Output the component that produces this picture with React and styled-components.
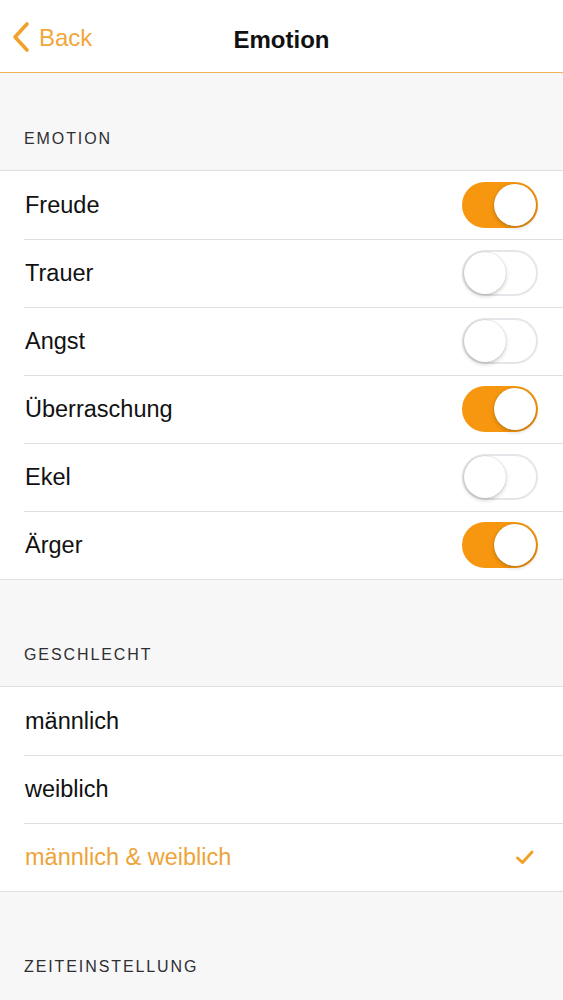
import React, { useState } from "react";
import styled, { createGlobalStyle } from "styled-components";

const GlobalStyle = createGlobalStyle`
  html, body {
    margin: 0;
    padding: 0;
    background: #f7f7f8;
    font-family: "Liberation Sans", Arial, sans-serif;
  }
`;

const emotions = [
  { id: "freude", label: "Freude", on: true },
  { id: "trauer", label: "Trauer", on: false },
  { id: "angst", label: "Angst", on: false },
  { id: "ueberraschung", label: "Überraschung", on: true },
  { id: "ekel", label: "Ekel", on: false },
  { id: "aerger", label: "Ärger", on: true },
];

const genders = ["männlich", "weiblich", "männlich & weiblich"];

const App = () => {
  const [state, setState] = useState(
    Object.fromEntries(emotions.map((e) => [e.id, e.on]))
  );
  const [gender, setGender] = useState("männlich & weiblich");

  return (
    <Page>
      <GlobalStyle />
      <NavBar>
        <BackButton>
          <svg width="20" height="32" viewBox="0 0 20 32">
            <path
              d="M16 3 L4 16 L16 29"
              fill="none"
              stroke="#f1a129"
              strokeWidth="3.6"
              strokeLinecap="round"
              strokeLinejoin="round"
            />
          </svg>
          <span>Back</span>
        </BackButton>
        <Title>Emotion</Title>
      </NavBar>

      <SectionHeader $height={97}>EMOTION</SectionHeader>
      <Group>
        {emotions.map((e) => (
          <Row key={e.id}>
            <Label>{e.label}</Label>
            <Toggle
              $on={state[e.id]}
              onClick={() => setState({ ...state, [e.id]: !state[e.id] })}
            >
              <Knob $on={state[e.id]} />
            </Toggle>
          </Row>
        ))}
      </Group>

      <SectionHeader $height={106}>GESCHLECHT</SectionHeader>
      <Group>
        {genders.map((g) => (
          <Row key={g} onClick={() => setGender(g)}>
            <Label $active={gender === g}>{g}</Label>
            {gender === g && (
              <svg width="20" height="16" viewBox="0 0 20 16">
                <path
                  d="M2.5 9 L7.5 13.5 L17 3"
                  fill="none"
                  stroke="#f1a129"
                  strokeWidth="3"
                  strokeLinecap="round"
                  strokeLinejoin="round"
                />
              </svg>
            )}
          </Row>
        ))}
      </Group>

      <SectionHeader $height={106}>ZEITEINSTELLUNG</SectionHeader>
    </Page>
  );
};

const Page = styled.div`
  width: 563px;
  min-height: 1000px;
  background: #f7f7f8;
`;

const NavBar = styled.header`
  position: relative;
  height: 72px;
  background: #ffffff;
  border-bottom: 1px solid #efb45a;
  display: flex;
  align-items: center;
  justify-content: center;
`;

const BackButton = styled.div`
  position: absolute;
  left: 11px;
  top: 21px;
  display: flex;
  align-items: center;
  gap: 8px;
  color: #f2a73b;
  font-size: 24px;

  span {
    margin-top: 2px;
  }
`;

const Title = styled.h1`
  margin: 0;
  margin-top: 8px;
  font-size: 24px;
  font-weight: 700;
  color: #111;
`;

const SectionHeader = styled.div`
  height: ${(p) => p.$height}px;
  box-sizing: border-box;
  display: flex;
  align-items: flex-end;
  padding: 0 0 21px 24px;
  font-size: 16px;
  line-height: 20px;
  letter-spacing: 1.9px;
  color: #2e2e33;
`;

const Group = styled.section`
  background: #ffffff;
  border-top: 1px solid #dedee2;
  border-bottom: 1px solid #dedee2;
`;

const Row = styled.div`
  position: relative;
  height: 68px;
  box-sizing: border-box;
  display: flex;
  align-items: center;
  justify-content: space-between;
  padding: 0 28px 0 25px;

  & + &::before {
    content: "";
    position: absolute;
    left: 24px;
    right: 0;
    top: 0;
    height: 1px;
    background: #dedee2;
  }
`;

const Label = styled.span`
  font-size: 23.5px;
  color: ${(p) => (p.$active ? "#eda43a" : "#111")};
`;

const Toggle = styled.div`
  position: relative;
  width: 76px;
  height: 46px;
  border-radius: 23px;
  box-sizing: border-box;
  margin-right: -3px;
  background: ${(p) => (p.$on ? "#f7960f" : "#ffffff")};
  border: 2px solid ${(p) => (p.$on ? "#f7960f" : "#e6e6ea")};
`;

const Knob = styled.div`
  position: absolute;
  top: 0;
  left: ${(p) => (p.$on ? "30px" : "0")};
  width: 42px;
  height: 42px;
  border-radius: 50%;
  background: #ffffff;
  box-shadow: 0 2px 4px rgba(0, 0, 0, 0.2), 0 0 1px rgba(0, 0, 0, 0.25);
`;

export default App;
